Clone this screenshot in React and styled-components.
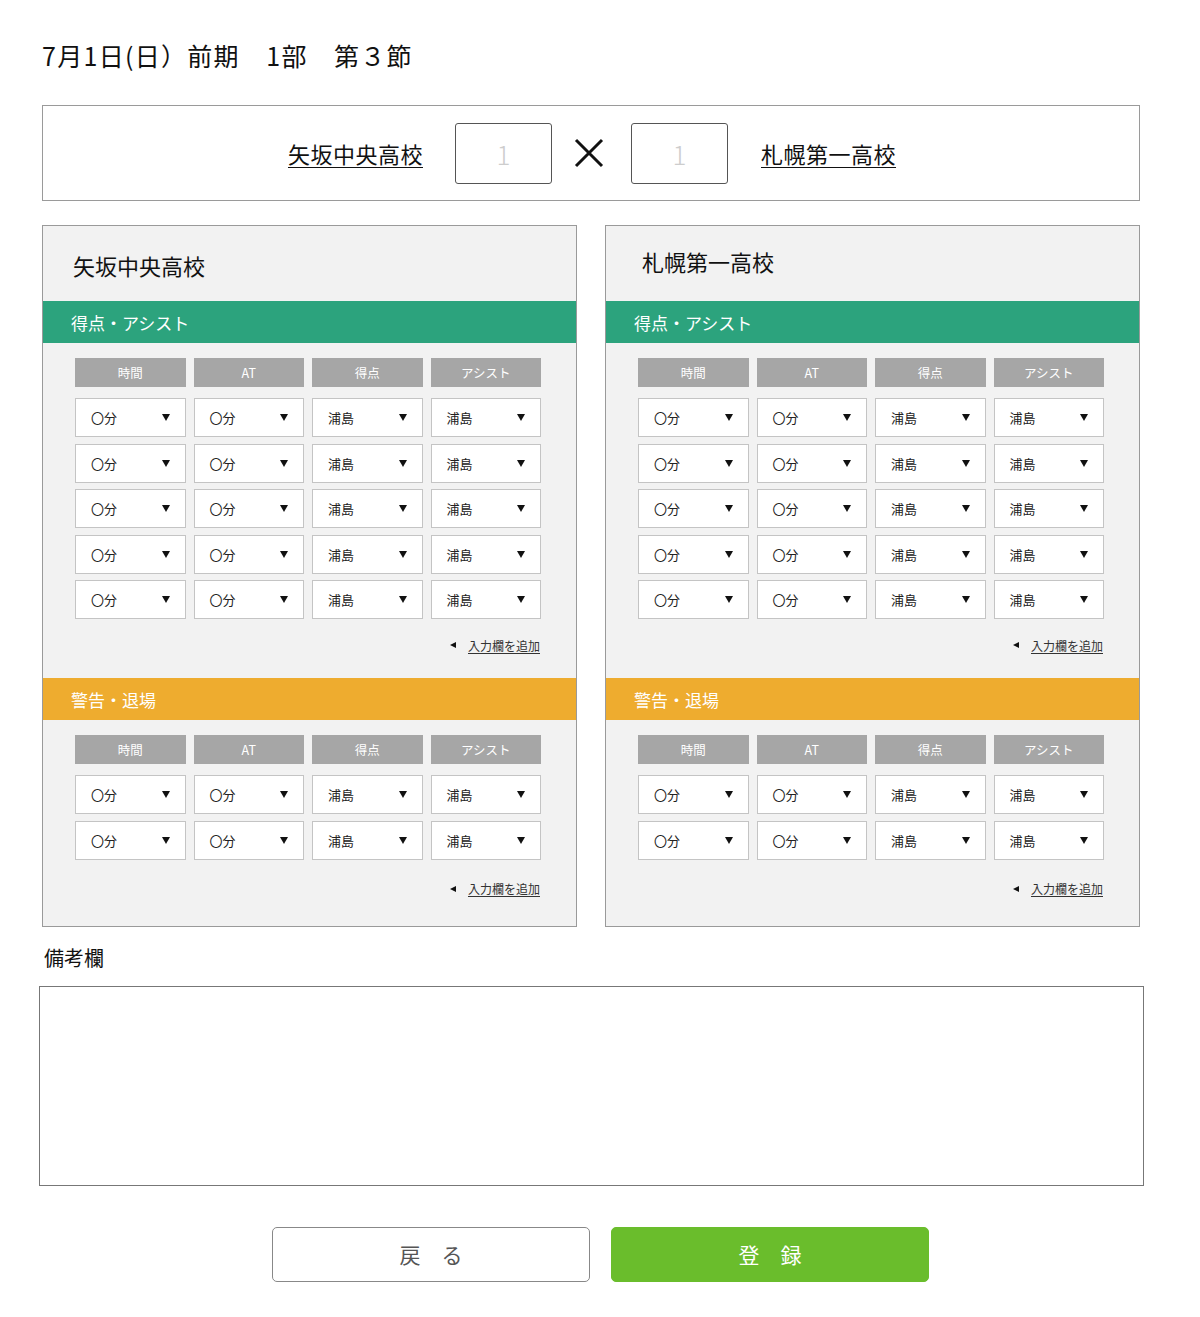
import React from 'react'
import styled, { createGlobalStyle } from 'styled-components';

const GlobalStyle = createGlobalStyle`
  body{
    margin:0;
    background:#fff;
    font-family:"Noto Sans CJK JP", "Noto Sans", sans-serif;
    color:#111;
  }
`;

const Page = styled.div`
  width:1098px;
  padding:37px 0 35px 42px;
`;

const Title = styled.h1`
  margin:0;
  font-size:25px;
  font-weight:400;
  line-height:36px;
  letter-spacing:1.3px;
  white-space:pre;
`;

const ScoreBar = styled.div`
  margin-top:32px;
  height:96px;
  box-sizing:border-box;
  border:1px solid #9a9a9a;
  display:flex;
  align-items:center;
  justify-content:center;
  padding-left:2px;
  .team{
    font-size:22px;
    letter-spacing:0.5px;
    text-decoration:underline;
    text-underline-offset:4px;
    text-decoration-thickness:1px;
  }
  .left{ margin-right:32px; }
  .right{ margin-left:33px; }
  .cross{ margin:0 27px 0 22px; display:block; }
`;

const ScoreInput = styled.div`
  width:97px;
  height:61px;
  box-sizing:border-box;
  border:1px solid #555;
  border-radius:3px;
  display:flex;
  align-items:center;
  justify-content:center;
  color:#cdcdcd;
  font-size:26px;
  font-weight:300;
`;

const Panels = styled.div`
  margin-top:24px;
  display:grid;
  grid-template-columns:535px 535px;
  column-gap:28px;
`;

const Panel = styled.div`
  background:#f2f2f2;
  border:1px solid #9a9a9a;
  padding-bottom:29px;
`;

const PanelTitle = styled.div`
  height:75px;
  box-sizing:border-box;
  padding-left:${p => p.$indent}px;
  padding-top:${p => Math.max(p.$shift, 0)}px;
  padding-bottom:${p => Math.max(-p.$shift, 0)}px;
  display:flex;
  align-items:center;
  font-size:22px;
`;

const SectionHead = styled.div`
  height:42px;
  background:${p => p.$color};
  color:#fff;
  font-size:17px;
  display:flex;
  align-items:center;
  padding-left:28px;
`;

const Table = styled.div`
  padding:15px 35px 0 32px;
  display:grid;
  grid-template-columns:repeat(4, 1fr);
  column-gap:8px;
  row-gap:6.5px;
`;

const HeadCell = styled.div`
  height:29px;
  background:#a6a6a6;
  color:#fff;
  font-size:12.5px;
  display:flex;
  align-items:center;
  justify-content:center;
  margin-bottom:4.5px;
`;

const SelectCell = styled.div`
  height:39px;
  box-sizing:border-box;
  background:#fff;
  border:1px solid #c4c4c4;
  display:flex;
  align-items:center;
  justify-content:space-between;
  padding:0 15px 0 15px;
  font-size:13px;
  color:#222;
  &::after{
    content:"";
    border-left:4px solid transparent;
    border-right:4px solid transparent;
    border-top:7px solid #111;
  }
`;

const AddLink = styled.div`
  margin:${p => p.$top}px 36px 0 0;
  height:16px;
  display:flex;
  justify-content:flex-end;
  align-items:center;
  font-size:12px;
  color:#333;
  span{
    text-decoration:underline;
    text-underline-offset:2px;
  }
  &::before{
    content:"";
    border-top:3.5px solid transparent;
    border-bottom:3.5px solid transparent;
    border-right:6px solid #111;
    margin-right:12px;
  }
`;

const Gap = styled.div`
  height:25px;
`;

const NoteLabel = styled.div`
  margin:20px 0 0 2px;
  font-size:20px;
  line-height:22px;
`;

const NoteBox = styled.textarea`
  display:block;
  margin:17px 0 0 -3px;
  width:1105px;
  height:200px;
  box-sizing:border-box;
  border:1px solid #777;
  resize:none;
  outline:none;
`;

const Buttons = styled.div`
  margin:41px 0 0 230px;
  display:flex;
  gap:21px;
`;

const Button = styled.div`
  width:318px;
  height:55px;
  box-sizing:border-box;
  border-radius:5px;
  display:flex;
  align-items:center;
  justify-content:center;
  font-size:21px;
  white-space:pre;
  border:1px solid ${p => p.$primary ? '#6abd2c' : '#888'};
  background:${p => p.$primary ? '#6abd2c' : '#fff'};
  color:${p => p.$primary ? '#fff' : '#555'};
`;

const heads = ['時間', 'AT', '得点', 'アシスト'];

function Section({ rows, top }) {
  const cells = [];
  for (let i = 0; i < rows; i++) {
    cells.push(
      <SelectCell key={i + 'a'}>〇分</SelectCell>,
      <SelectCell key={i + 'b'}>〇分</SelectCell>,
      <SelectCell key={i + 'c'}>浦島</SelectCell>,
      <SelectCell key={i + 'd'}>浦島</SelectCell>
    );
  }
  return (
    <>
      <Table>
        {heads.map(h => <HeadCell key={h}>{h}</HeadCell>)}
        {cells}
      </Table>
      <AddLink $top={top}><span>入力欄を追加</span></AddLink>
    </>
  );
}

function TeamPanel({ name, indent, shift }) {
  return (
    <Panel>
      <PanelTitle $indent={indent} $shift={shift}>{name}</PanelTitle>
      <SectionHead $color="#2ca37d">得点・アシスト</SectionHead>
      <Section rows={5} top={18} />
      <Gap />
      <SectionHead $color="#eeac2f">警告・退場</SectionHead>
      <Section rows={2} top={21} />
    </Panel>
  );
}

export default function App() {
  return (
    <>
      <GlobalStyle />
      <Page>
        <Title>{'7月1日(日）前期　1部　第３節'}</Title>
        <ScoreBar>
          <span className="team left">矢坂中央高校</span>
          <ScoreInput>1</ScoreInput>
          <svg className="cross" width="30" height="30" viewBox="0 0 30 30">
            <path d="M2 2 L28 28 M28 2 L2 28" stroke="#111" strokeWidth="3" fill="none" />
          </svg>
          <ScoreInput>1</ScoreInput>
          <span className="team right">札幌第一高校</span>
        </ScoreBar>
        <Panels>
          <TeamPanel name="矢坂中央高校" indent={30} shift={2} />
          <TeamPanel name="札幌第一高校" indent={36} shift={-6} />
        </Panels>
        <NoteLabel>備考欄</NoteLabel>
        <NoteBox />
        <Buttons>
          <Button>{'戻　る'}</Button>
          <Button $primary>{'登　録'}</Button>
        </Buttons>
      </Page>
    </>
  );
}
